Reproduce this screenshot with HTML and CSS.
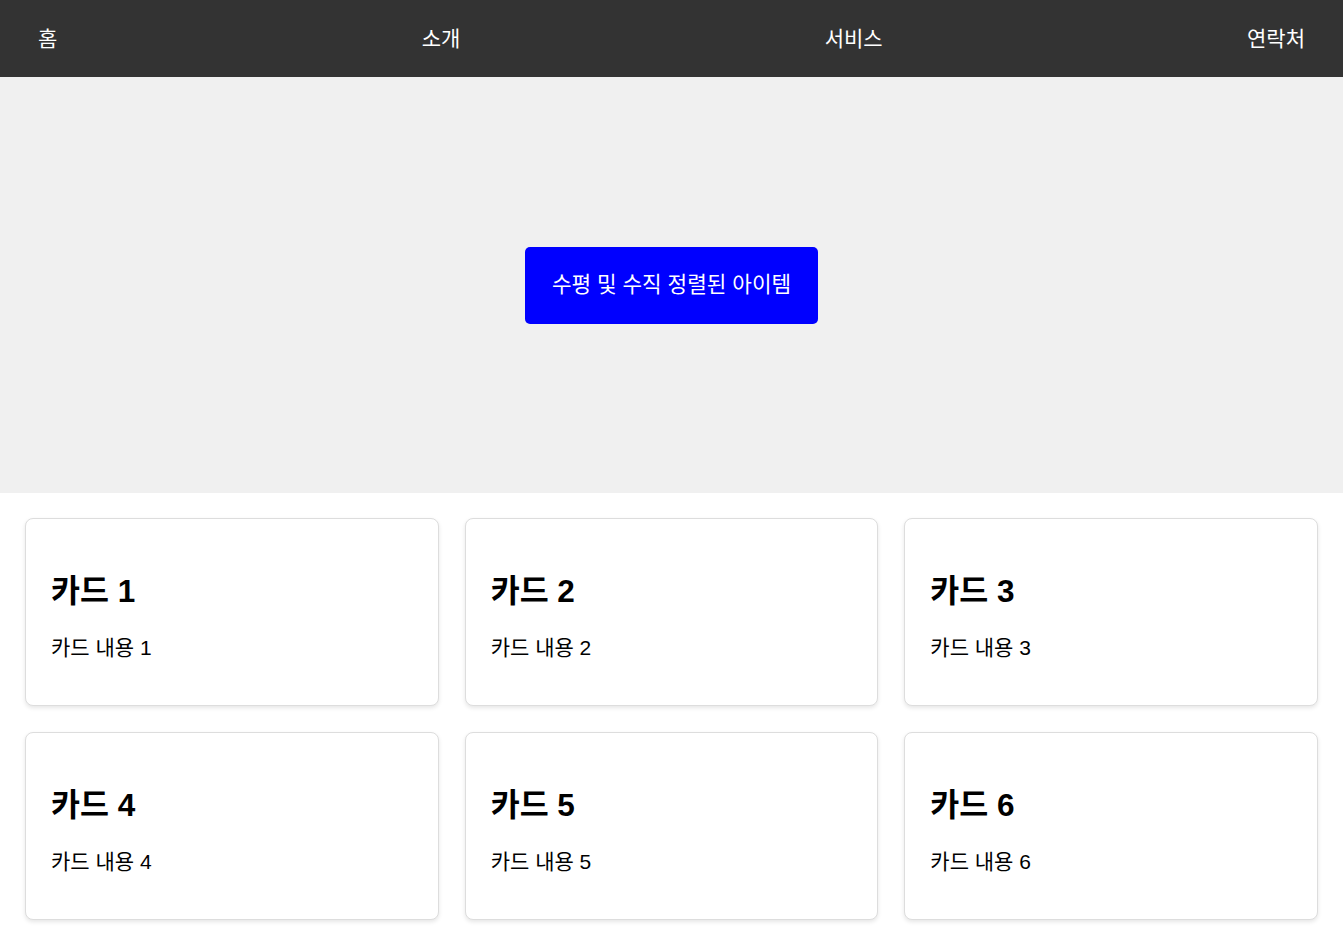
FILE: index.html
```html
<!DOCTYPE html>
<html lang="ko">
<head>
    <meta charset="UTF-8">
    <meta name="viewport" content="width=device-width, initial-scale=1.0">
    <title>레이아웃 예제</title>
    <link rel="stylesheet" href="styles.css">
</head>
<body>

    <nav class="navbar">
        <a href="#">홈</a>
        <a href="#">소개</a>
        <a href="#">서비스</a>
        <a href="#">연락처</a>
    </nav>

    <section class="hero">
        <div class="center-box">수평 및 수직 정렬된 아이템</div>
    </section>

    <section class="card-grid">
        <div class="card">
            <h2>카드 1</h2>
            <p>카드 내용 1</p>
        </div>
        <div class="card">
            <h2>카드 2</h2>
            <p>카드 내용 2</p>
        </div>
        <div class="card">
            <h2>카드 3</h2>
            <p>카드 내용 3</p>
        </div>
        <div class="card">
            <h2>카드 4</h2>
            <p>카드 내용 4</p>
        </div>
        <div class="card">
            <h2>카드 5</h2>
            <p>카드 내용 5</p>
        </div>
        <div class="card">
            <h2>카드 6</h2>
            <p>카드 내용 6</p>
        </div>
    </section>

</body>
</html>
```

FILE: styles.css
```css
body {
    margin: 0;
    padding: 0;
    font-family: "Liberation Sans", Arial, "Noto Sans CJK KR", sans-serif;
    background: #fff;
    color: #000;
}

/* 상단 메뉴 */
.navbar {
    display: flex;
    justify-content: space-between;
    align-items: center;
    height: 77px;
    padding: 0 38px;
    background: #333;
}

.navbar a {
    color: white;
    text-decoration: none;
    font-size: 21px;
    line-height: 26px;
}

/* 가운데 정렬 영역 */
.hero {
    display: flex;
    justify-content: center;
    align-items: center;
    height: 416px;
    background: #f0f0f0;
}

.center-box {
    background: #0000ff;
    color: white;
    font-size: 21.3px;
    line-height: 25px;
    padding: 26px 27px;
    border-radius: 5px;
}

/* 카드 그리드 */
.card-grid {
    display: grid;
    grid-template-columns: repeat(3, 1fr);
    gap: 26px;
    padding: 25px;
}

.card {
    padding: 0 25px;
    border: 1px solid #ddd;
    border-radius: 8px;
    background: white;
    box-shadow: 0 2px 4px rgba(0, 0, 0, 0.1);
}

.card h2 {
    font-size: 31.5px;
    line-height: 34px;
    margin: 55px 0 28px;
}

.card p {
    font-size: 21px;
    line-height: 24px;
    margin: 0 0 45px;
}
```
